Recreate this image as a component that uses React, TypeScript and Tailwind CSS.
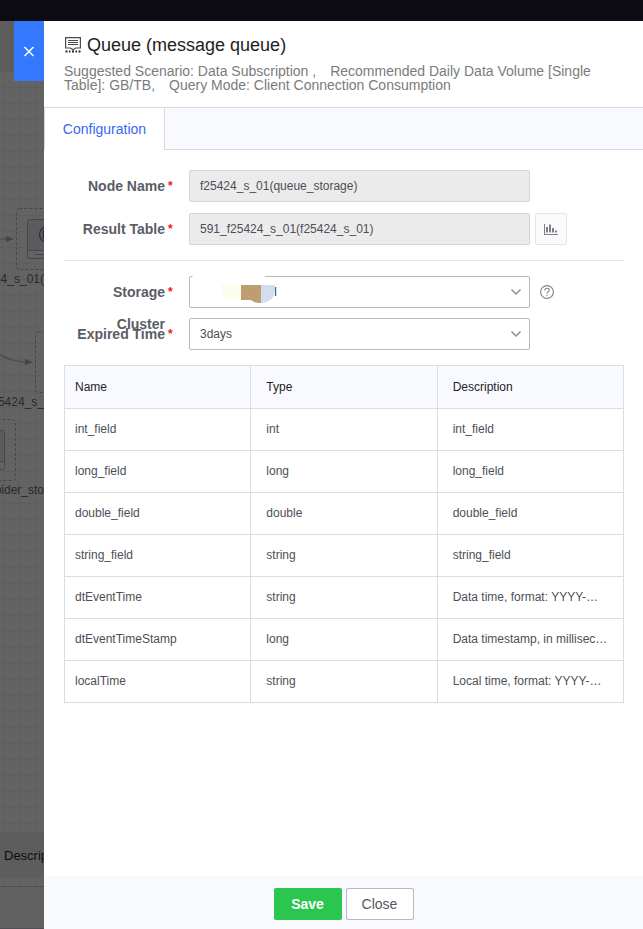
import type { ReactNode } from "react";

type Field = { name: string; type: string; description: string };

const fields: Field[] = [
  { name: "int_field", type: "int", description: "int_field" },
  { name: "long_field", type: "long", description: "long_field" },
  { name: "double_field", type: "double", description: "double_field" },
  { name: "string_field", type: "string", description: "string_field" },
  { name: "dtEventTime", type: "string", description: "Data time, format: YYYY-…" },
  { name: "dtEventTimeStamp", type: "long", description: "Data timestamp, in millisec…" },
  { name: "localTime", type: "string", description: "Local time, format: YYYY-…" },
];

function QueueIcon() {
  return (
    <svg className="shrink-0" width="16" height="16" viewBox="0 0 16 16" fill="none" stroke="#4a4b50" aria-hidden="true">
      <path d="M.6.6h14.800v10.400H10.500L8 12.800 5.500 11H.600z" strokeWidth="1.200" />
      <path d="M3 3.500h10M3 5.500h10M3 7.500h10" />
      <path d="M.5 14.500h2M4 14.500h1.500M7 14.500h2M10.500 14.500H12M13.500 14.500h2" strokeWidth="2" stroke="#222" />
    </svg>
  );
}

function Chevron() {
  return (
    <svg className="pointer-events-none absolute right-2 top-[11px]" width="12" height="10" viewBox="0 0 12 10" fill="none" stroke="#8b8e99" strokeWidth="1.500" aria-hidden="true">
      <path d="M1.500 2.500 6 7l4.500-4.500" />
    </svg>
  );
}

function CanvasBackdrop() {
  return (
    <div className="relative w-11 shrink-0 overflow-hidden bg-[#636363] bg-[linear-gradient(to_right,#5e5e5e_1px,transparent_1px),linear-gradient(to_bottom,#5e5e5e_1px,transparent_1px)] bg-[length:16px_16px] bg-[position:3px_2px] text-xs leading-4 text-[#28292b]">
      <div className="absolute inset-x-0 top-0 h-[50px] bg-[#5d5d5d]" />
      <svg className="absolute left-0 top-0" width="44" height="480" viewBox="0 21 44 480" fill="none" aria-hidden="true">
        <g stroke="#45474a" strokeDasharray="3 2">
          <rect x="16.5" y="208.500" width="61" height="61" rx="3" />
          <rect x="35.500" y="331.500" width="61" height="61" rx="3" />
          <rect x="-45.500" y="419.500" width="61" height="61" rx="3" />
        </g>
        <g stroke="#45474b">
          <rect x="27.500" y="219.500" width="39" height="39" rx="2" fill="#5b5c5f" />
          <path d="M28 250.500h38v6a1 1 0 0 1-1 1H29z" fill="#636363" stroke="none" />
          <path d="M28 250.500h38M35 254.500h20" />
          <rect x="-34.500" y="430.500" width="39" height="39" rx="2" fill="#5b5c5f" />
          <path d="M-34 462h38v7h-38z" fill="#636363" stroke="none" />
          <path d="M-34 461.500H4" />
        </g>
        <g stroke="#2b2c30" strokeWidth="1.200">
          <circle cx="47.500" cy="234.500" r="8" />
          <path d="M43.500 230v9" />
        </g>
        <path d="M0 239h7M0 355c9 4 15 7 27 7" stroke="#484a4e" strokeWidth="1.200" />
        <path d="m6 236 8 3-8 3zM25 359l8 3-8 3z" fill="#434548" />
      </svg>
      <span className="absolute right-0 top-[250px] whitespace-nowrap">f25424_s_01(</span>
      <span className="absolute right-0 top-[373px] whitespace-nowrap">f25424_s_</span>
      <span className="absolute right-0 top-[461px] whitespace-nowrap">spider_sto</span>
      <div className="absolute inset-x-0 top-[811px] flex h-[46px] items-center bg-[#5d5d5d] pl-1 pt-0.5 text-[13px] text-[#0d0d10]">Description</div>
      <div className="absolute inset-x-0 bottom-0 top-[865px] border-y border-[#505054] bg-[#616161]" />
    </div>
  );
}

function FormRow({ id, label, side, children }: { id: string; label: string; side?: ReactNode; children: ReactNode }) {
  return (
    <div className="flex h-8">
      <div className="flex w-[125px] shrink-0 justify-end pr-4">
        <label htmlFor={id} className="w-[101px] text-right text-sm font-bold leading-8 text-[#5a5c66]">
          {label}
        </label>
        <span className="w-2 pl-[3px] text-xs font-bold leading-8 text-[#f01818]" aria-hidden="true">*</span>
      </div>
      <div className="relative min-w-0 flex-1">{children}</div>
      <div className="flex w-[94px] shrink-0 items-center">{side}</div>
    </div>
  );
}

const disabledInput =
  "h-8 w-full rounded-[2px] border border-[#d4d6de] bg-[#ebebeb] px-[10px] text-xs text-[#4d4f56] outline-none";
const selectBox =
  "h-8 w-full appearance-none rounded-[2px] border border-[#b6b9c2] bg-white px-[10px] text-xs text-[#4d4f56] outline-none";

export default function App() {
  return (
    <div className="flex min-h-screen flex-col bg-white font-['Liberation_Sans',Arial,sans-serif]">
      <div className="h-[21px] bg-[#0c0b11]" />
      <div className="relative flex flex-1">
        <CanvasBackdrop />
        <button type="button" aria-label="Close panel" className="absolute left-[14px] top-0 flex h-[60px] w-[30px] items-center justify-center bg-[#3378ff]">
          <svg width="12" height="12" viewBox="0 0 12 12" stroke="#fff" strokeWidth="1.500" aria-hidden="true">
            <path d="m1.500 2 9 9M10.500 2l-9 9" />
          </svg>
        </button>

        <section className="flex min-w-0 flex-1 flex-col">
          <header className="px-5 pb-4 pt-3">
            <div className="flex h-6 items-center gap-[6px] pl-px">
              <QueueIcon />
              <h1 className="text-lg leading-6 text-[#1e1e20]">Queue (message queue)</h1>
            </div>
            <p className="mt-[7px] h-[27px] text-sm leading-[14px] text-[#7b7b7b]">
              Suggested Scenario: Data Subscription ,&emsp;Recommended Daily Data Volume [Single Table]: GB/TB,&emsp;Query Mode: Client Connection Consumption
            </p>
          </header>

          <nav className="flex h-[43px] border-t border-[#d6d8e0] bg-[#f9faff]">
            <button type="button" className="w-[121px] border-x border-[#d6d8e0] bg-white pb-px text-sm text-[#3a67f5]">
              Configuration
            </button>
            <div className="flex-1 border-b border-[#d6d8e0]" />
          </nav>

          <form className="flex flex-1 flex-col" onSubmit={(e) => e.preventDefault()}>
            <div className="flex-1 pb-6 pl-5 pr-[19px] pt-5">
              <div className="flex flex-col gap-[11px]">
                <FormRow id="node" label="Node Name">
                  <input id="node" className={disabledInput} value="f25424_s_01(queue_storage)" disabled readOnly />
                </FormRow>
                <FormRow
                  id="result"
                  label="Result Table"
                  side={
                    <button type="button" aria-label="Data statistics" className="ml-[5px] flex size-8 items-center justify-center rounded-[2px] border border-[#e3e4e8] bg-[#fafafa]">
                      <svg width="14" height="12" viewBox="0 0 14 12" fill="#7d808b" aria-hidden="true">
                        <path d="M0 1h1v10h13v1H0zM2 4h2v5.500H2zM5 1.500h2v8H5zM8 5h2v4.500H8zM11 7.500h2v2h-2z" />
                      </svg>
                    </button>
                  }
                >
                  <input id="result" className={disabledInput} value="591_f25424_s_01(f25424_s_01)" disabled readOnly />
                </FormRow>
              </div>

              <hr className="my-[15px] border-[#e6e7ea]" />

              <div className="flex flex-col gap-[10px]">
                <FormRow
                  id="cluster"
                  label="Storage Cluster"
                  side={
                    <button type="button" aria-label="Help" className="ml-[10px]">
                      <svg width="14" height="14" viewBox="0 0 14 14" fill="none" stroke="#7f828c" aria-hidden="true">
                        <circle cx="7" cy="7" r="6.400" strokeWidth="1.100" />
                        <path d="M4.800 5.400C4.800 4 5.700 3.300 7 3.300s2.200.800 2.200 1.900C9.200 6.700 7 6.700 7 8.700M7 9.800v1.200" strokeWidth="1.100" />
                      </svg>
                    </button>
                  }
                >
                  <select id="cluster" className={selectBox} defaultValue="">
                    <option value="" aria-label="Hidden cluster name" />
                  </select>
                  <svg className="pointer-events-none absolute left-0 top-0" width="90" height="30" viewBox="0 0 90 30" aria-hidden="true">
                    <path d="M4 0h73l-4 2H2z" fill="#fff" />
                    <path d="M32 9h20v14c-8 1-14 0-19-1z" fill="#fafeee" />
                    <path d="M52 9h20v18c-5 0-8-1-10-3H52z" fill="#bf9d70" />
                    <path d="M72 9h14v6c-1 8-7 12-14 12z" fill="#d4dcef" />
                    <path d="M86.500 11v9" stroke="#566274" />
                    <path d="M87.500 11v9" stroke="#c4e6f8" />
                  </svg>
                  <Chevron />
                </FormRow>
                <FormRow id="expired" label="Expired Time">
                  <select id="expired" className={selectBox} defaultValue="3">
                    <option value="3">3days</option>
                  </select>
                  <Chevron />
                </FormRow>
              </div>

              <table className="mt-[15px] w-full table-fixed border-collapse text-left text-xs text-[#4d4f56]">
                <thead>
                  <tr className="h-[43px] bg-[#f9faff] text-[#242427]">
                    <th className="border border-[#dcdde3] px-[10px] font-normal">Name</th>
                    <th className="border border-[#dcdde3] px-[15px] font-normal">Type</th>
                    <th className="border border-[#dcdde3] px-[15px] font-normal">Description</th>
                  </tr>
                </thead>
                <tbody>
                  {fields.map((f) => (
                    <tr key={f.name} className="h-[42px]">
                      <td className="border border-[#dcdde3] px-[10px] pb-0.5">{f.name}</td>
                      <td className="border border-[#dcdde3] px-[15px] pb-0.5">{f.type}</td>
                      <td className="truncate border border-[#dcdde3] pb-0.5 pl-[15px] pr-[10px]">{f.description}</td>
                    </tr>
                  ))}
                </tbody>
              </table>
            </div>

            <footer className="flex justify-center gap-1 bg-[#f9faff] pb-[9px] pt-3">
              <button type="submit" className="h-8 w-[68px] rounded-[2px] bg-[#2ac64d] text-sm font-bold text-white">Save</button>
              <button type="button" className="h-8 w-[68px] rounded-[2px] border border-[#b6b9c2] bg-white text-sm text-[#55575f]">Close</button>
            </footer>
          </form>
        </section>
      </div>
    </div>
  );
}
